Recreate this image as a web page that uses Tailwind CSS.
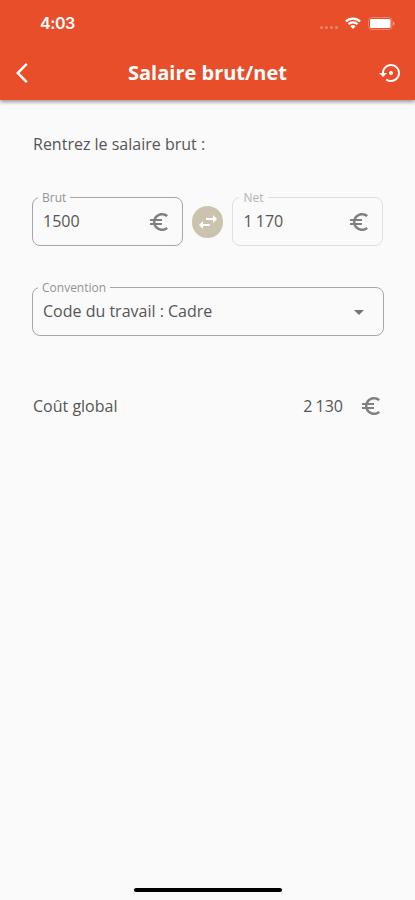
<!DOCTYPE html>
<html lang="fr">
<head>
<meta charset="utf-8">
<title>Salaire brut/net</title>
<script src="https://cdn.jsdelivr.net/npm/@tailwindcss/browser@4"></script>
</head>
<body class="bg-[#fafafa] font-['Open_Sans',sans-serif] text-[#555] overflow-hidden">
<svg class="hidden">
  <symbol id="euro" viewBox="0 0 24 24"><path d="M15 18.5c-2.51 0-4.68-1.42-5.76-3.5H15v-2H8.58c-.05-.33-.08-.66-.08-1s.03-.67.08-1H15V9H9.24C10.32 6.92 12.5 5.5 15 5.5c1.61 0 3.09.59 4.23 1.57L21 5.3C19.41 3.87 17.3 3 15 3c-3.92 0-7.24 2.51-8.48 6H3v2h3.06c-.04.33-.06.66-.06 1s.02.67.06 1H3v2h3.52c1.24 3.49 4.56 6 8.48 6 2.31 0 4.41-.87 6-2.3l-1.78-1.77c-1.13.98-2.6 1.57-4.22 1.57z"/></symbol>
</svg>
<div class="flex h-[900px] w-[415px] flex-col">
  <header class="h-[100px] shrink-0 bg-[#e84e29] text-white shadow-[0_2px_4px_rgba(0,0,0,0.4)]">
    <div class="flex h-[46px] items-center pl-10 pr-5">
      <span class="font-['Inter',sans-serif] text-[16px] font-semibold leading-none tracking-[-0.4px]">4:03</span>
      <div class="ml-auto flex items-center">
        <div class="mr-[7px] mt-[8px] flex gap-[2px] opacity-30">
          <i class="size-[3px] rounded-full bg-white"></i><i class="size-[3px] rounded-full bg-white"></i><i class="size-[3px] rounded-full bg-white"></i><i class="size-[3px] rounded-full bg-white"></i>
        </div>
        <svg class="mr-[7px] h-[12px] w-[16px]" viewBox="0 0 16 12" fill="none" stroke="#fff" stroke-width="2.3"><path d="M.9 4.5a10 10 0 0 1 14.2 0M3.4 7.2a6.5 6.5 0 0 1 9.2 0"/><path d="M8 12 5.4 9.3a3.7 3.7 0 0 1 5.200 0z" fill="#fff" stroke="none"/></svg>
        <svg class="h-[13px] w-[27px]" viewBox="0 0 27 13"><rect x=".5" y=".5" width="23.5" height="12" rx="3.5" fill="none" stroke="#fff" stroke-opacity=".3"/><rect x="2" y="2" width="20.5" height="9" rx="1.5" fill="#fff"/><path d="M25 4.500q1.500.5 1.500 2t-1.500 2z" fill="#fff" fill-opacity=".5"/></svg>
      </div>
    </div>
    <div class="flex h-[54px] items-center pl-4 pr-[12px]">
      <svg class="size-6" viewBox="0 0 24 24" fill="currentColor"><path d="M11.67 3.87L9.900 2.100 0 12l9.900 9.900 1.770-1.770L3.540 12z"/></svg>
      <h1 class="ml-[88px] text-[20px] font-bold leading-none">Salaire brut/net</h1>
      <svg class="ml-auto size-6" viewBox="0 0 24 24" fill="currentColor"><path d="M14 12c0-1.100-.9-2-2-2s-2 .9-2 2 .9 2 2 2 2-.9 2-2zm-2-9c-4.970 0-9 4.030-9 9H0l4 4 4-4H5c0-3.870 3.130-7 7-7s7 3.130 7 7-3.130 7-7 7c-1.510 0-2.910-.49-4.060-1.300l-1.420 1.440C8.040 20.300 9.940 21 12 21c4.970 0 9-4.030 9-9s-4.030-9-9-9z"/></svg>
    </div>
  </header>

  <main class="flex-1 px-8 pt-8">
    <p class="pl-px text-[16px] leading-6">Rentrez le salaire brut :</p>

    <div class="mt-[41px] flex items-center gap-[9px]">
      <div class="relative flex h-[49px] w-[151px] items-center justify-between rounded-lg border border-[#a6a6a6] pl-[10px] pr-[11px]">
        <span class="absolute -top-2 left-[5px] bg-[#fafafa] px-1 text-[12px] leading-4 text-[#939393]">Brut</span>
        <span class="pb-0.5 text-[16px]">1500</span>
        <svg class="size-6 fill-[#808080]"><use href="#euro"/></svg>
      </div>
      <div class="grid size-8 place-items-center rounded-full bg-[#cbc3ad]">
        <svg class="size-6" viewBox="0 0 24 24" fill="#fff"><path d="M6.990 11L3 15l3.990 4v-3H14v-2H6.990v-3zM21 9l-3.990-4v3H10v2h7.010v3L21 9z"/></svg>
      </div>
      <div class="relative flex h-[49px] w-[151px] items-center justify-between rounded-lg border border-[#dfdfdf] pl-[10px] pr-[11px]">
        <span class="absolute -top-2 left-[6px] bg-[#fafafa] px-1 text-[12px] leading-4 text-[#b4b4b4]">Net</span>
        <span class="pb-0.5 text-[16px] [word-spacing:-1px]">1 170</span>
        <svg class="size-6 fill-[#808080]"><use href="#euro"/></svg>
      </div>
    </div>

    <div class="relative mt-[41px] flex h-[49px] w-[352px] items-center justify-between rounded-lg border border-[#a6a6a6] pl-[10px] pr-[12px]">
      <span class="absolute -top-2 left-[5px] bg-[#fafafa] px-1 text-[12px] leading-4 text-[#939393]">Convention</span>
      <span class="pb-0.5 text-[16px]">Code du travail : Cadre</span>
      <svg class="size-6 fill-[#757575]" viewBox="0 0 24 24"><path d="M7 10l5 5 5-5z"/></svg>
    </div>

    <div class="mt-[58px] flex items-center pl-px text-[16px] leading-6">
      <span>Coût global</span>
      <span class="ml-auto [word-spacing:-1px]">2 130</span>
      <svg class="ml-4 size-6 fill-[#808080]"><use href="#euro"/></svg>
    </div>
  </main>

  <div class="mb-2 h-[4px] w-[148px] shrink-0 self-center rounded-full bg-black"></div>
</div>
</body>
</html>
